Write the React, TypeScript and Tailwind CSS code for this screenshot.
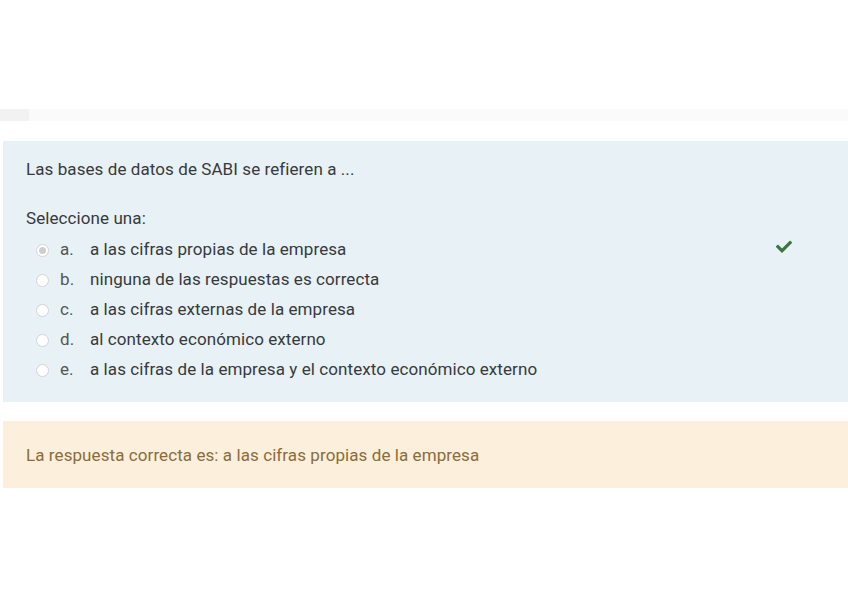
const options = [
  { letter: "a.", text: "a las cifras propias de la empresa", checked: true },
  { letter: "b.", text: "ninguna de las respuestas es correcta" },
  { letter: "c.", text: "a las cifras externas de la empresa" },
  { letter: "d.", text: "al contexto económico externo" },
  { letter: "e.", text: "a las cifras de la empresa y el contexto económico externo" },
];

function Radio({ checked }: { checked?: boolean }) {
  return (
    <span className="w-[13px] h-[13px] rounded-full border border-[#d4d4d4] bg-white flex items-center justify-center">
      {checked && <span className="w-[7px] h-[7px] rounded-full bg-[#cfcfcf]" />}
    </span>
  );
}

function CheckMark() {
  return (
    <svg width="16" height="13" viewBox="0 0 512 400" className="fill-[#3c763d]">
      <path d="M173.9 389.4L7.5 223c-10-10-10-26.2 0-36.2l36.2-36.2c10-10 26.2-10 36.2 0L192 262.7 432.1 22.6c10-10 26.2-10 36.2 0l36.2 36.2c10 10 10 26.2 0 36.2L210.1 389.4c-10 10-26.2 10-36.2 0z" />
    </svg>
  );
}

export default function App() {
  return (
    <div className="w-[848px] h-[599px] bg-white overflow-hidden tracking-[0.08px]" style={{ fontFamily: "Roboto, 'Liberation Sans', sans-serif" }}>
      <div className="pt-[109px] flex h-[121px]">
        <div className="w-[29px] h-[12px] bg-[#f2f2f2]" />
        <div className="flex-1 h-[12px] bg-[#fafafa]" />
      </div>

      <div className="mt-[20px] ml-[3px] bg-[#e7f1f6] pt-[17px] pb-[17px] pl-[23px] text-[17px] text-[#373a3c]">
        <p className="leading-[22px]">Las bases de datos de SABI se refieren a ...</p>
        <p className="mt-[27px] leading-[22px]">Seleccione una:</p>
        <div className="mt-[6px]">
          {options.map((o) => (
            <div key={o.letter} className="flex items-center h-[30px]">
              <span className="ml-[10px] w-[24px]">
                <Radio checked={o.checked} />
              </span>
              <span className="w-[30px] text-[#555]">{o.letter}</span>
              <span>{o.text}</span>
              {o.checked && (
                <span className="ml-auto mr-[56px] mb-[7px]">
                  <CheckMark />
                </span>
              )}
            </div>
          ))}
        </div>
      </div>

      <div className="mt-[19px] ml-[3px] bg-[#fcefdc] h-[67px] pl-[23px] pt-[3px] flex items-center text-[17px] text-[#8a6d3b]">
        La respuesta correcta es: a las cifras propias de la empresa
      </div>
    </div>
  );
}
